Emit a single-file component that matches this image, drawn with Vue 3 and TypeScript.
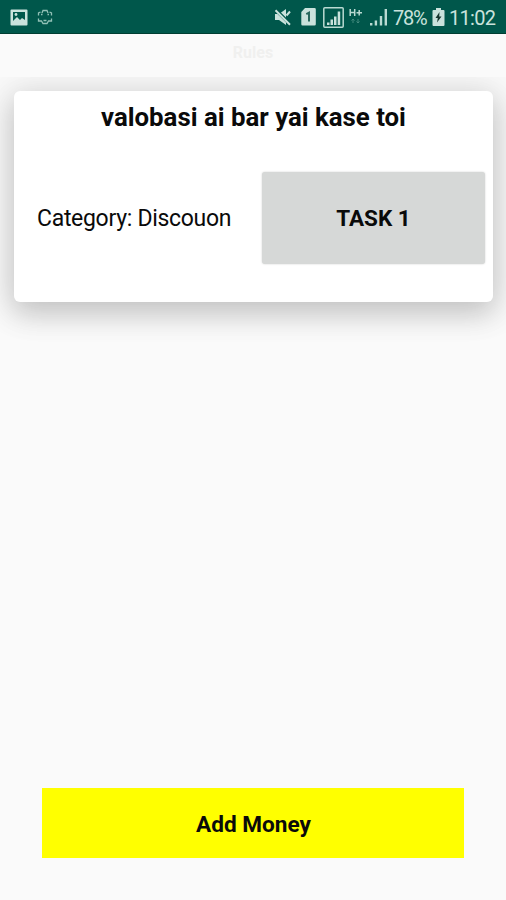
<script setup lang="ts">
interface Task {
  title: string
  category: string
  action: string
}

const heading = 'Rules'
const battery = '78%'
const clock = '11:02'
const tasks: Task[] = [
  { title: 'valobasi ai bar yai kase toi', category: 'Discouon', action: 'Task 1' },
]
</script>

<template>
  <div class="screen">
    <header class="status">
      <div class="notices">
        <svg class="photo" width="18" height="17" viewBox="0 0 18 17">
          <path fill="#c9e2dc" fill-rule="evenodd" d="M1.5.5h15q1 0 1 1v14q0 1-1 1h-15q-1 0-1-1v-14q0-1 1-1ZM3 3v9l4-4 3 3 2-2 3 2V3Z" />
          <circle cx="6" cy="5.5" r="1.4" fill="#c9e2dc" />
        </svg>
        <svg class="bot" width="16" height="16" viewBox="0 0 16 16" fill="none" stroke="#92c1b7" stroke-width="1.3">
          <path d="M1.500 6.500V4l2-1M5 4l1-2.500h4L11 4M12.500 3l2 1v2.500M4 5.500h1.500M10.500 5.500H12M1.500 9.500V12h3l1.500 2.500h4L11.500 12h3V9.500M6.500 11.500h3" />
        </svg>
      </div>
      <div class="indicators">
        <svg width="18" height="18" viewBox="0 0 18 18">
          <path fill="#c9e2dc" d="M1 6h4l7-5v16l-7-5H1Z" />
          <path d="M1 1l16 16" stroke="#00574b" stroke-width="3.4" />
          <path d="M1.5 2.2L16 16.7M12.5 7.5L16 3.500" stroke="#c9e2dc" stroke-width="2" />
        </svg>
        <svg class="sim" width="15" height="18" viewBox="0 0 15 18">
          <path fill="#c9e2dc" d="M4 0h9.500q1.300 0 1.300 1.300v15q0 1.300-1.300 1.300h-12Q.300 17.600.300 16.300V4Z" />
          <path d="M5.300 6.200L8 4.700V13.500" fill="none" stroke="#28685e" stroke-width="2" />
        </svg>
        <svg class="boxed" width="21" height="21" viewBox="0 0 21 21">
          <rect x=".8" y=".8" width="19.400" height="19.400" rx="1" fill="none" stroke="#b9dad2" stroke-width="1.500" />
          <path fill="#c9e2dc" d="M4 15.500h2.500V18H4ZM7.500 12.500H10V18H7.500ZM11 9.500h2.500V18H11ZM14.700 4.500h2.500V18h-2.500Z" />
        </svg>
        <svg class="data" width="14" height="16" viewBox="0 0 14 16" fill="none">
          <path d="M1.200 0v7M5.700 0v7M1.200 3.500h4.500M7.500 3.700h5.500M10.200 1v5.500" stroke="#b9dad2" stroke-width="1.500" />
          <path d="M4 10v4M2.500 11.500L4 10l1.500 1.500M9 10v4M7.500 12.500L9 14l1.500-1.500" stroke="#438b7f" />
        </svg>
        <svg class="signal" width="18" height="17" viewBox="0 0 18 17">
          <path fill="#b9dad2" d="M0 14h2.400v2.500H0ZM4.700 11.500h2.400v5H4.700ZM9.800 7h2.400v9.500H9.800ZM14.600 0h2.400v16.500h-2.400Z" />
        </svg>
        <span class="percent">{{ battery }}</span>
        <svg class="cell" width="13" height="18" viewBox="0 0 13 18">
          <path fill="#c9e2dc" d="M4 0h5v2h2.500q1 0 1 1v14q0 1-1 1h-10q-1 0-1-1V3q0-1 1-1H4Z" />
          <path fill="#17362f" d="M7.500 4L3.500 10h2.300L5 14.500 9.500 8.500H7.200Z" />
        </svg>
        <time class="clock">{{ clock }}</time>
      </div>
    </header>

    <h1 class="heading">{{ heading }}</h1>

    <main class="list">
      <article v-for="task in tasks" :key="task.title" class="card">
        <h2 class="title">{{ task.title }}</h2>
        <div class="row">
          <p class="category">Category: {{ task.category }}</p>
          <button class="task" type="button">{{ task.action }}</button>
        </div>
      </article>
    </main>

    <footer class="footer">
      <button class="add" type="button">Add Money</button>
    </footer>
  </div>
</template>

<style>
body {
  margin: 0;
  background: #fafafa;
}
</style>

<style scoped>
.screen {
  display: flex;
  flex-direction: column;
  width: 100%;
  height: 900px;
  overflow: hidden;
  background: #fafafa;
  color: #0a0a0a;
  font-family: Roboto, "Liberation Sans", sans-serif;
}

.status {
  display: flex;
  justify-content: space-between;
  box-sizing: border-box;
  height: 34px;
  padding: 0 10px 0 10px;
  border-bottom: 1px solid #003e32;
  background: #00574b;
  color: #c9e2dc;
}

.notices,
.indicators {
  display: flex;
  align-items: center;
  height: 34px;
}

.bot {
  margin-left: 9px;
}

.sim {
  margin-left: 9px;
}

.boxed {
  margin-left: 7px;
}

.data {
  margin-left: 5px;
}

.signal {
  margin-left: 7px;
}

.percent {
  width: 34px;
  margin-left: 5px;
  padding-top: 2px;
  font-size: 20px;
  letter-spacing: -1.3px;
  white-space: nowrap;
}

.cell {
  margin-left: 5px;
}

.clock {
  width: 47px;
  margin-left: 4px;
  padding-top: 2px;
  font-size: 20px;
  letter-spacing: -0.7px;
  white-space: nowrap;
}

.heading {
  height: 43px;
  margin: 0;
  color: #f0f0ef;
  font-size: 16px;
  font-weight: 700;
  line-height: 38px;
  text-align: center;
}

.list {
  flex: 1;
  padding: 14px 13px 0 14px;
  overflow: hidden;
}

.card {
  box-sizing: border-box;
  height: 211px;
  padding: 9px 8px 0 22px;
  border-radius: 6px;
  background: #fff;
  box-shadow: 0 12px 28px rgb(0 0 0 / 16%), 0 2px 36px 8px rgb(0 0 0 / 9%);
}

.title {
  margin: 0 14px 0 0;
  font-size: 25.8px;
  font-weight: 700;
  line-height: 34px;
  text-align: center;
  white-space: nowrap;
}

.row {
  display: flex;
  align-items: center;
  justify-content: space-between;
  margin-top: 38px;
}

.category {
  margin: 0;
  padding: 2px 0 0 1px;
  font-size: 23px;
  letter-spacing: -0.3px;
  line-height: 30px;
  white-space: nowrap;
}

.task {
  width: 223px;
  height: 92px;
  padding: 0;
  border: 0;
  border-radius: 3px;
  background: #d6d8d7;
  box-shadow: 0 0 2px rgb(0 0 0 / 20%);
  color: #0a0a0a;
  font: 700 22.5px Roboto, "Liberation Sans", sans-serif;
  text-transform: uppercase;
}

.footer {
  padding: 0 42px 42px 42px;
}

.add {
  display: block;
  width: 100%;
  height: 70px;
  padding: 2px 0 0 1px;
  border: 0;
  background: #ff0;
  color: #0a0a0a;
  font: 700 22.6px Roboto, "Liberation Sans", sans-serif;
}
</style>
